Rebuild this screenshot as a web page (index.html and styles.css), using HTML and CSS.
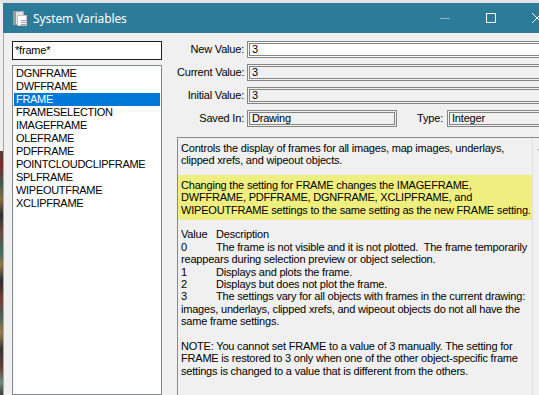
FILE: index.html
```html
<!DOCTYPE html>
<html>
<head>
<meta charset="utf-8">
<link rel="stylesheet" href="styles.css">
</head>
<body>
<div class="screen">
  <div class="topstrip"></div>
  <div class="row">
    <div class="desk"></div>
    <div class="window">
      <div class="titlebar">
        <svg class="appicon" width="14" height="15" viewBox="0 0 14 15">
          <rect x="0.5" y="0.5" width="10" height="13" fill="#e4e4e4" stroke="#a8a8a8"/>
          <rect x="0" y="0" width="3" height="14" fill="#9a9a9a"/>
          <rect x="4.5" y="4.5" width="9" height="10" fill="#ffffff" stroke="#c4c4c4"/>
          <line x1="8" y1="9.5" x2="13" y2="9.5" stroke="#a0a0a0"/>
          <line x1="8" y1="11.5" x2="13" y2="11.5" stroke="#a0a0a0"/>
          <line x1="8" y1="13.5" x2="13" y2="13.5" stroke="#a0a0a0"/>
        </svg>
        <span class="title">System Variables</span>
        <div class="caps">
          <div class="cap"><svg width="10" height="10" viewBox="0 0 10 10"><line x1="0" y1="5.5" x2="10" y2="5.5" stroke="#8fb5c5" stroke-width="1"/></svg></div>
          <div class="cap"><svg width="10" height="10" viewBox="0 0 10 10"><rect x="0.5" y="0.5" width="9" height="9" fill="none" stroke="#ffffff" stroke-width="1"/></svg></div>
          <div class="cap"><svg width="10" height="10" viewBox="0 0 10 10"><path d="M0 0 L10 10 M10 0 L0 10" stroke="#ffffff" stroke-width="1"/></svg></div>
        </div>
      </div>
      <div class="body">
        <div class="leftcol">
          <div class="search">*frame*</div>
          <ul class="list">
            <li>DGNFRAME</li>
            <li>DWFFRAME</li>
            <li class="sel">FRAME</li>
            <li>FRAMESELECTION</li>
            <li>IMAGEFRAME</li>
            <li>OLEFRAME</li>
            <li>PDFFRAME</li>
            <li>POINTCLOUDCLIPFRAME</li>
            <li>SPLFRAME</li>
            <li>WIPEOUTFRAME</li>
            <li>XCLIPFRAME</li>
          </ul>
        </div>
        <div class="rightcol">
          <div class="form">
            <span class="lbl">New Value:</span>
            <div class="field white">3</div>
            <span class="lbl">Current Value:</span>
            <div class="field">3</div>
            <span class="lbl">Initial Value:</span>
            <div class="field">3</div>
            <span class="lbl">Saved In:</span>
            <div class="savedrow">
              <div class="field saved">Drawing</div>
              <span class="lbl typelbl">Type:</span>
              <div class="field typefield">Integer</div>
            </div>
          </div>
          <div class="desc">
            <div class="desctext">
              <p>Controls the display of frames for all images, map images, underlays,<br>clipped xrefs, and wipeout objects.</p>
              <p class="hl">Changing the setting for FRAME changes the IMAGEFRAME,<br>DWFFRAME, PDFFRAME, DGNFRAME, XCLIPFRAME, and<br>WIPEOUTFRAME settings to the same setting as the new FRAME setting.</p>
              <p><span class="tab">Value</span>Description<br><span class="tab">0</span>The frame is not visible and it is not plotted.&nbsp; The frame temporarily<br>reappears during selection preview or object selection.<br><span class="tab">1</span>Displays and plots the frame.<br><span class="tab">2</span>Displays but does not plot the frame.<br><span class="tab">3</span>The settings vary for all objects with frames in the current drawing:<br>images, underlays, clipped xrefs, and wipeout objects do not all have the<br>same frame settings.</p>
              <p>NOTE: You cannot set FRAME to a value of 3 manually. The setting for<br>FRAME is restored to 3 only when one of the other object-specific frame<br>settings is changed to a value that is different from the others.</p>
            </div>
            <div class="scrollbar">
              <svg class="uparrow" width="9" height="5" viewBox="0 0 9 5"><path d="M0.5 4.5 L4.5 0.5 L8.5 4.5" fill="none" stroke="#a3a3a3" stroke-width="1"/></svg>
            </div>
          </div>
        </div>
      </div>
    </div>
  </div>
</div>
</body>
</html>
```

FILE: styles.css
```css
html, body {
  margin: 0;
  padding: 0;
}

body {
  width: 539px;
  height: 395px;
  overflow: hidden;
  background: #f0f0f0;
  font-family: "Liberation Sans", Arial, sans-serif;
  font-size: 11px;
  color: #000;
}

.screen {
  width: 539px;
  height: 395px;
  overflow: hidden;
  display: flex;
  flex-direction: column;
}

.topstrip {
  height: 3px;
  flex: none;
  background: #e3e3e3;
}

.row {
  display: flex;
  flex: 1;
  min-height: 0;
}

.desk {
  width: 3px;
  flex: none;
  background: linear-gradient(to bottom,
    #efefef 0, #efefef 148px,
    #5a3b33 148px, #7a2e2a 165px, #3c5a4e 180px, #8a6d3e 196px,
    #2f2f34 212px, #6e4a3a 230px, #3f6b62 248px, #8f7446 262px,
    #2b2b30 278px, #7b3a30 296px, #47625a 312px, #9a7b4a 330px,
    #333338 346px, #5f4034 364px, #6f8a7a 380px, #3a3a3a 392px);
}

.window {
  width: 557px;
  flex: none;
  display: flex;
  flex-direction: column;
}

.titlebar {
  height: 30px;
  flex: none;
  background: #2c7b98;
  display: flex;
  align-items: center;
  color: #fff;
}

.appicon {
  margin-left: 10px;
  flex: none;
}

.title {
  margin-left: 6px;
  font-family: "Noto Sans", "Open Sans", sans-serif;
  font-size: 12px;
  letter-spacing: -0.1px;
  color: #fff;
}

.caps {
  margin-left: auto;
  display: flex;
  height: 30px;
}

.cap {
  width: 46px;
  height: 30px;
  display: flex;
  align-items: center;
  justify-content: center;
}

.cap svg {
  display: block;
}

.body {
  flex: 1;
  min-height: 0;
  display: flex;
  border-left: 1px solid #a6a6a6;
  padding: 8px 10px 0 8px;
  background: #f0f0f0;
}

.leftcol {
  width: 150px;
  flex: none;
  display: flex;
  flex-direction: column;
}

.search {
  height: 19px;
  box-sizing: border-box;
  border: 1px solid #1c1c1c;
  background: #fff;
  padding-left: 2px;
  line-height: 17px;
  letter-spacing: -0.2px;
}

.list {
  list-style: none;
  margin: 5px 0 0 0;
  padding: 1px;
  flex: 1;
  border: 1px solid #828790;
  background: #fff;
}

.list li {
  height: 13px;
  line-height: 13px;
  padding-left: 2px;
  letter-spacing: -0.3px;
  white-space: nowrap;
}

.list li.sel {
  background: #0078d7;
  color: #fff;
}

.rightcol {
  flex: 1;
  min-width: 0;
  margin-left: 15px;
  display: flex;
  flex-direction: column;
}

.form {
  display: grid;
  grid-template-columns: 67px 1fr;
  grid-auto-rows: 17px;
  column-gap: 3px;
  row-gap: 6px;
}

.lbl {
  text-align: right;
  line-height: 17px;
  white-space: nowrap;
  letter-spacing: -0.2px;
}

.field {
  box-sizing: border-box;
  height: 17px;
  border: 3px double #858585;
  background: #f0f0f0;
  padding-left: 2px;
  line-height: 11px;
  letter-spacing: -0.2px;
  white-space: nowrap;
}

.field.white {
  background: #fff;
}

.savedrow {
  display: flex;
}

.field.saved {
  width: 150px;
  flex: none;
}

.typelbl {
  width: 46px;
  flex: none;
  margin-right: 4px;
}

.field.typefield {
  flex: 1;
}

.desc {
  margin-top: 10px;
  flex: 1;
  min-height: 0;
  display: flex;
  border: 1px solid #8a8a8a;
  border-bottom: none;
  background: #f0f0f0;
}

.desctext {
  flex: 1;
  min-width: 0;
  padding-top: 3.5px;
  line-height: 12.4px;
  letter-spacing: -0.2px;
  white-space: nowrap;
  overflow: hidden;
}

.desctext p {
  margin: 0 0 12.4px 0;
  padding: 0 0 0 3px;
}

.desctext p.hl {
  background: #efef80;
  padding: 4px 0 4px 3px;
  margin: -4px 0 8.4px 0;
}

.tab {
  display: inline-block;
  width: 35px;
}

.scrollbar {
  width: 16px;
  flex: none;
  border-left: 1px solid #e2e2e2;
  background: #f0f0f0;
  position: relative;
}

.uparrow {
  display: block;
  margin: 8px auto 0 auto;
}
```
